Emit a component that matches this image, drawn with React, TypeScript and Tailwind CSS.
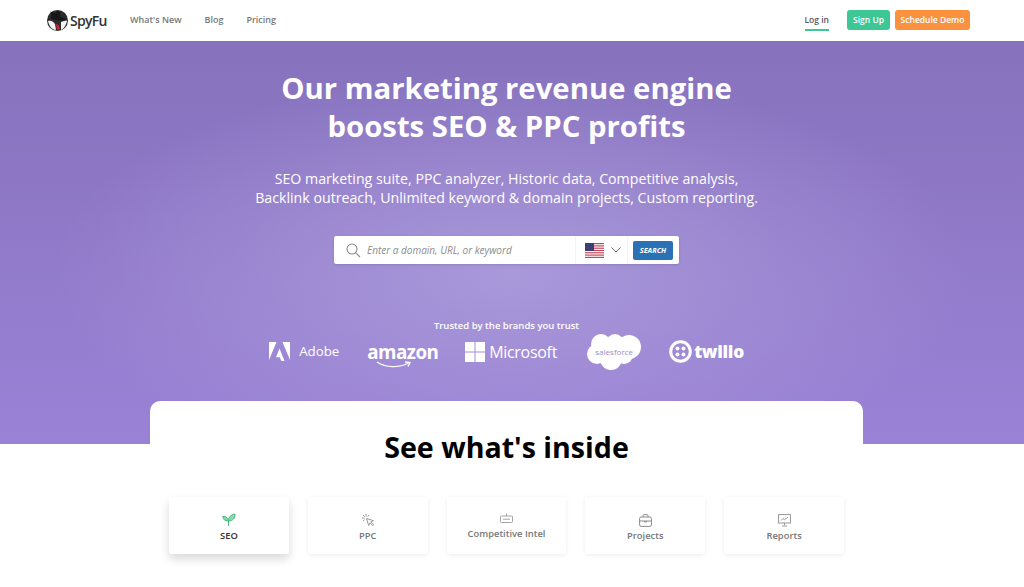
const font = "font-['Open_Sans',sans-serif]";

function SpyLogo() {
  return (
    <svg width="21" height="21" viewBox="0 0 21 21">
      <circle cx="10.5" cy="10.5" r="10.5" fill="#2b2b2d" />
      <path d="M1 11c3-1 5 0 7 3l1 6c-4 0-7-4-8-9z" fill="#f4f4f4" />
      <path d="M14 12c2-1 4-1.500 6-1.500-.5 4-3 8-6 9.500z" fill="#f4f4f4" />
      <path d="M3.500 1.500L8 3l3-2 2 1 .5 5c2 .5 4 1 5.500 3-5 1-11 .5-16-1.500 2-1.500 2-3 .5-6.500z" fill="#161618" />
      <path d="M9 14l3 1 1 4-3 1z" fill="#c2283a" />
    </svg>
  );
}

function UsFlag() {
  return (
    <svg width="19" height="15" viewBox="0 0 19 15">
      <rect width="19" height="15" fill="#fff" />
      <rect y="0" width="19" height="1.2" fill="#c0485a" />
      <rect y="2.3" width="19" height="1.2" fill="#c0485a" />
      <rect y="4.6" width="19" height="1.2" fill="#c0485a" />
      <rect y="6.9" width="19" height="1.2" fill="#c0485a" />
      <rect y="9.2" width="19" height="1.2" fill="#c0485a" />
      <rect y="11.5" width="19" height="1.2" fill="#c0485a" />
      <rect y="13.8" width="19" height="1.2" fill="#c0485a" />
      <rect width="9" height="8" fill="#3c3f73" />
    </svg>
  );
}

function AdobeMark() {
  return (
    <svg width="21" height="19" viewBox="0 0 21 19" fill="#fff">
      <path d="M0 0h7.5L0 18z" />
      <path d="M13.5 0H21v18z" />
      <path d="M10.5 6.500L15.500 19h-3.200l-1.500-3.800H7z" />
    </svg>
  );
}

function MicrosoftMark() {
  return (
    <svg width="20" height="20" viewBox="0 0 20 20" fill="#fff">
      <rect width="9.500" height="9.500" />
      <rect x="10.500" width="9.500" height="9.500" />
      <rect y="10.500" width="9.500" height="9.500" />
      <rect x="10.500" y="10.500" width="9.500" height="9.500" />
    </svg>
  );
}

function SalesforceLogo() {
  return (
    <div className="relative w-[54px] h-[37px]">
      <svg width="54" height="37" viewBox="0 0 54 37" fill="#fff">
        <circle cx="14" cy="11" r="10" />
        <circle cx="28" cy="10" r="9" />
        <circle cx="42" cy="14" r="12" />
        <circle cx="10" cy="21" r="10" />
        <circle cx="24" cy="26" r="11" />
        <circle cx="37" cy="22" r="9" />
      </svg>
      <span className="absolute inset-0 flex items-center justify-center text-[8px] text-[#9a8fc4] font-['Open_Sans',sans-serif]">salesforce</span>
    </div>
  );
}

function TwilioMark() {
  return (
    <svg width="23" height="23" viewBox="0 0 23 23" fill="none">
      <circle cx="11.500" cy="11.500" r="9.800" stroke="#fff" strokeWidth="3" />
      <circle cx="8.500" cy="8.500" r="2" fill="#fff" />
      <circle cx="14.500" cy="8.500" r="2" fill="#fff" />
      <circle cx="8.500" cy="14.500" r="2" fill="#fff" />
      <circle cx="14.500" cy="14.500" r="2" fill="#fff" />
    </svg>
  );
}

function SeoIcon() {
  return (
    <svg width="14" height="14" viewBox="0 0 14 14" fill="#8fd9b0" stroke="#3dbb7c" strokeWidth="1">
      <path d="M6.500 8C3 8 1 6.500 .8 3.500 4 3.200 6.500 5 6.500 8z" />
      <path d="M6.500 8c0-4 2.500-6.500 6.500-7 .2 4-2 7-6.500 7z" />
      <path d="M6.500 8v5" fill="none" />
    </svg>
  );
}

function PpcIcon() {
  return (
    <svg width="14" height="14" viewBox="0 0 14 14" fill="none" stroke="#8f8f8f" strokeWidth=".9">
      <path d="M5.500 5.500l2.200 7 1.300-2.600 2.700 2.800 1-1-2.800-2.700 2.600-1.300z" />
      <path d="M5 1v2.500M1 5h2.500M2 2l1.800 1.800M8 2L6.800 3.500M2 8l1.500-1.200" />
    </svg>
  );
}

function IntelIcon() {
  return (
    <svg width="13" height="10" viewBox="0 0 13 10" fill="none" stroke="#9a9a9a" strokeWidth=".9">
      <rect x=".5" y="3" width="12" height="6.500" rx=".8" />
      <path d="M6.500 3V.5M3 6.200h7" />
    </svg>
  );
}

function ProjectsIcon() {
  return (
    <svg width="13" height="13" viewBox="0 0 13 13" fill="none" stroke="#8a8a8a" strokeWidth="1">
      <rect x=".6" y="3" width="11.800" height="9.400" rx="1.500" />
      <path d="M4 3V1.800C4 1 4.500.6 5 .6h3c.5 0 1 .4 1 1.200V3M.6 7h11.800M5.500 7v1h2V7" />
    </svg>
  );
}

function ReportsIcon() {
  return (
    <svg width="13" height="13" viewBox="0 0 13 13" fill="none" stroke="#8a8a8a" strokeWidth=".9">
      <rect x=".6" y=".6" width="11.800" height="8.400" />
      <path d="M3 6.500l2-2 1.500 1.200L10 3M6.500 9v2M4 12h5" />
    </svg>
  );
}

const tabs = [
  { label: "SEO", icon: <SeoIcon />, active: true },
  { label: "PPC", icon: <PpcIcon /> },
  { label: "Competitive Intel", icon: <IntelIcon />, tight: true },
  { label: "Projects", icon: <ProjectsIcon /> },
  { label: "Reports", icon: <ReportsIcon /> },
];

export default function App() {
  return (
    <div className={`${font} h-[587px] overflow-hidden bg-white`}>
      {/* Nav */}
      <nav className="h-[41px] flex items-center pl-[47px] pr-[54px] pb-[1px] bg-white">
        <div className="flex items-center gap-[2px] w-[83px]">
          <SpyLogo />
          <span className="text-[14px] font-semibold text-[#333] tracking-[-0.7px]">SpyFu</span>
        </div>
        <div className="flex items-center gap-[23px] text-[9px] font-semibold text-[#777]">
          <span>What's New</span>
          <span>Blog</span>
          <span>Pricing</span>
        </div>
        <div className="ml-auto flex items-center">
          <span className="text-[8.500px] font-semibold text-[#555] border-b-2 border-[#3cc795] pt-[5px] pb-[3px] mr-[18px]">Log in</span>
          <span className="h-[20px] w-[43px] flex items-center justify-center rounded-[3px] bg-[#3cc795] text-white text-[8.500px] font-semibold mr-[5px]">Sign Up</span>
          <span className="h-[20px] w-[75px] flex items-center justify-center rounded-[3px] bg-[#f9913f] text-white text-[8.500px] font-semibold">Schedule Demo</span>
        </div>
      </nav>

      {/* Hero */}
      <section className="h-[403px] pr-[11px] flex flex-col items-center text-white bg-[#8a72c0] bg-[radial-gradient(ellipse_45%_50%_at_50%_58%,rgba(175,160,222,0.8)_0%,rgba(175,160,222,0)_100%),linear-gradient(180deg,#8672bc_0%,#9a82d6_100%)]">
        <h1 className="mt-[28px] text-[29.300px] leading-[38px] font-bold text-center">
          Our marketing revenue engine
          <br />
          boosts SEO &amp; PPC profits
        </h1>
        <p className="mt-[24px] text-[14.200px] leading-[19px] text-center">
          SEO marketing suite, PPC analyzer, Historic data, Competitive analysis,
          <br />
          Backlink outreach, Unlimited keyword &amp; domain projects, Custom reporting.
        </p>

        <div className="mt-[29px] w-[345px] h-[28px] bg-white rounded-[2px] flex items-center shadow-sm">
          <svg className="ml-[12px] shrink-0" width="15" height="15" viewBox="0 0 15 15" fill="none" stroke="#8a8a8a" strokeWidth="1.100">
            <circle cx="6" cy="6" r="5" />
            <path d="M9.800 9.800L14 14" />
          </svg>
          <span className="ml-[6px] text-[10px] italic text-[#8c8c8c] flex-1">Enter a domain, URL, or keyword</span>
          <div className="h-full flex items-center border-x border-[#f3f3f3] pl-[9px] pr-[6px] gap-[7px]">
            <UsFlag />
            <svg width="10" height="6" viewBox="0 0 10 6" fill="none" stroke="#666" strokeWidth="1">
              <path d="M.5.500L5 5 9.500.500" />
            </svg>
          </div>
          <span className="ml-[5px] mr-[6px] w-[40px] h-[19px] flex items-center justify-center rounded-[2px] bg-[#2a72b5] text-white text-[7.300px] font-bold italic">SEARCH</span>
        </div>

        <p className="mt-[56px] text-[9.500px] leading-[12px] font-semibold">Trusted by the brands you trust</p>
        <div className="mt-[1px] flex items-center">
          <div className="flex items-center gap-[9px] w-[98px]">
            <AdobeMark />
            <span className="text-[13.300px] font-medium">Adobe</span>
          </div>
          <div className="w-[98px] flex flex-col items-start relative">
            <span className="text-[18.800px] leading-[24px] font-bold tracking-[-0.5px]">amazon</span>
            <svg className="absolute top-[21px] left-[9px]" width="36" height="8" viewBox="0 0 36 8" fill="none" stroke="#fff" strokeWidth="1.300">
              <path d="M1 1c9 6 22 6 32 1M29 1l5 .5-2 4" />
            </svg>
          </div>
          <div className="flex items-center gap-[4px] w-[122px]">
            <MicrosoftMark />
            <span className="text-[16px] font-medium tracking-[-0.3px]">Microsoft</span>
          </div>
          <div className="w-[82px]">
            <SalesforceLogo />
          </div>
          <div className="flex items-center gap-[2px]">
            <TwilioMark />
            <span className="text-[17.300px] font-extrabold tracking-[-0.3px]">twilio</span>
          </div>
        </div>
      </section>

      {/* Card */}
      <section className="relative mt-[-43px] mx-[150px] w-[713px] h-[300px] bg-white rounded-[10px] pt-[28px] px-[19px]">
        <h2 className="text-[28.600px] leading-[36px] font-bold text-black text-center">See what's inside</h2>
        <div className="mt-[32px] grid grid-cols-5 gap-[19px] w-[675px]">
          {tabs.map((tab) => (
            <div
              key={tab.label}
              className={`h-[57px] flex flex-col items-center rounded-[2px] pt-[16px] ${
                tab.active
                  ? "shadow-[0_5px_10px_rgba(0,0,0,0.15)]"
                  : "shadow-[0_1px_4px_rgba(0,0,0,0.08)]"
              }`}
            >
              <div className={`${tab.tight ? "h-[10px]" : "h-[14px]"} flex items-center`}>{tab.icon}</div>
              <span className={`${tab.tight ? "mt-[5px]" : "mt-[3px]"} text-[9.400px] leading-[12px] font-semibold ${tab.active ? "text-[#333]" : "text-[#777]"}`}>
                {tab.label}
              </span>
            </div>
          ))}
        </div>
      </section>
    </div>
  );
}
